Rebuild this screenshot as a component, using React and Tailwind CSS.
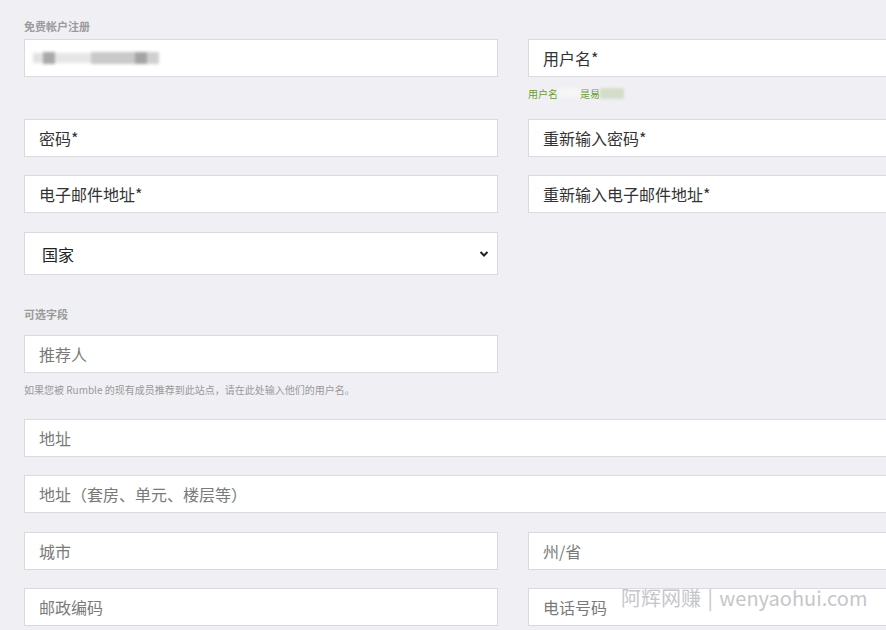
import React from "react";

const font = { fontFamily: '"Noto Sans CJK SC", "Noto Sans", sans-serif' };

const Field = ({ placeholder, dark, wide }) => (
  <input
    type="text"
    placeholder={placeholder}
    className={`h-[38px] shrink-0 ${wide ? "w-[978px]" : "w-[474px]"} bg-white border border-[#d9d9de] pl-[14px] text-[16px] outline-none ${
      dark ? "placeholder:text-[#333]" : "placeholder:text-[#7a7a7a]"
    }`}
  />
);

export default function App() {
  return (
    <div className="relative w-[886px] h-[630px] overflow-hidden bg-[#f0f0f4]" style={font}>
      <div className="w-[978px] ml-[24px] flex flex-col">
        {/* Required section */}
        <div className="mt-[20px] mb-[6px] h-[13px] text-[11px] leading-[13px] font-bold text-[#9a9a9a]">免费帐户注册</div>

        <div className="flex gap-[30px]">
          <div className="h-[38px] w-[474px] shrink-0 bg-white border border-[#d9d9de] flex items-center pl-[8px]">
            <div className="flex items-center blur-[1.5px]">
              <div className="w-[10px] h-[10px] bg-[#e2e2e2]" />
              <div className="w-[12px] h-[12px] bg-[#a9a9a9]" />
              <div className="w-[36px] h-[10px] bg-[#e6e6e6]" />
              <div className="w-[44px] h-[12px] bg-[#c9c9c9]" />
              <div className="w-[12px] h-[12px] bg-[#a4a4a4]" />
              <div className="w-[12px] h-[12px] bg-[#d0d0d0]" />
            </div>
          </div>
          <div className="flex flex-col">
            <Field placeholder="用户名*" dark />
            <div className="h-[42px] pt-[11px] flex text-[10px] leading-[12px] text-[#6c9a33]">
              <span>用户名</span>
              <span className="w-[22px] h-[10px] bg-[#f6f6f6] blur-[2px]" />
              <span>是易</span>
              <span className="w-[24px] h-[11px] bg-[#d5dcca] blur-[1.5px]" />
            </div>
          </div>
        </div>

        <div className="flex gap-[30px]">
          <Field placeholder="密码*" dark />
          <Field placeholder="重新输入密码*" dark />
        </div>

        <div className="flex gap-[30px] mt-[18px]">
          <Field placeholder="电子邮件地址*" dark />
          <Field placeholder="重新输入电子邮件地址*" dark />
        </div>

        <div className="mt-[19px] h-[43px] w-[474px] bg-white border border-[#d9d9de] flex items-center justify-between pl-[17px] pr-[8px] text-[16px] text-[#222]">
          <span>国家</span>
          <svg width="10" height="8" viewBox="0 0 10 8">
            <path d="M1.5 2 L5 5.5 L8.5 2" fill="none" stroke="#222" strokeWidth="2" />
          </svg>
        </div>

        {/* Optional section */}
        <div className="mt-[33px] mb-[14px] h-[13px] text-[11px] leading-[13px] font-bold text-[#9a9a9a]">可选字段</div>

        <Field placeholder="推荐人" />
        <div className="h-[46px] pt-[11px] text-[10px] leading-[12px] text-[#999]">
          如果您被 Rumble 的现有成员推荐到此站点，请在此处输入他们的用户名。
        </div>

        <Field placeholder="地址" wide />
        <div className="mt-[18px]">
          <Field placeholder="地址（套房、单元、楼层等）" wide />
        </div>

        <div className="flex gap-[30px] mt-[19px]">
          <Field placeholder="城市" />
          <Field placeholder="州/省" />
        </div>

        <div className="flex gap-[30px] mt-[18px]">
          <Field placeholder="邮政编码" />
          <Field placeholder="电话号码" />
        </div>
      </div>

      {/* Watermark */}
      <div className="absolute left-[621px] top-[584px] text-[20px] leading-[28px] text-[#c6c6ca] whitespace-nowrap pointer-events-none">
        阿辉网赚 <span className="mx-[2px]">|</span> wenyaohui.com
      </div>
    </div>
  );
}
